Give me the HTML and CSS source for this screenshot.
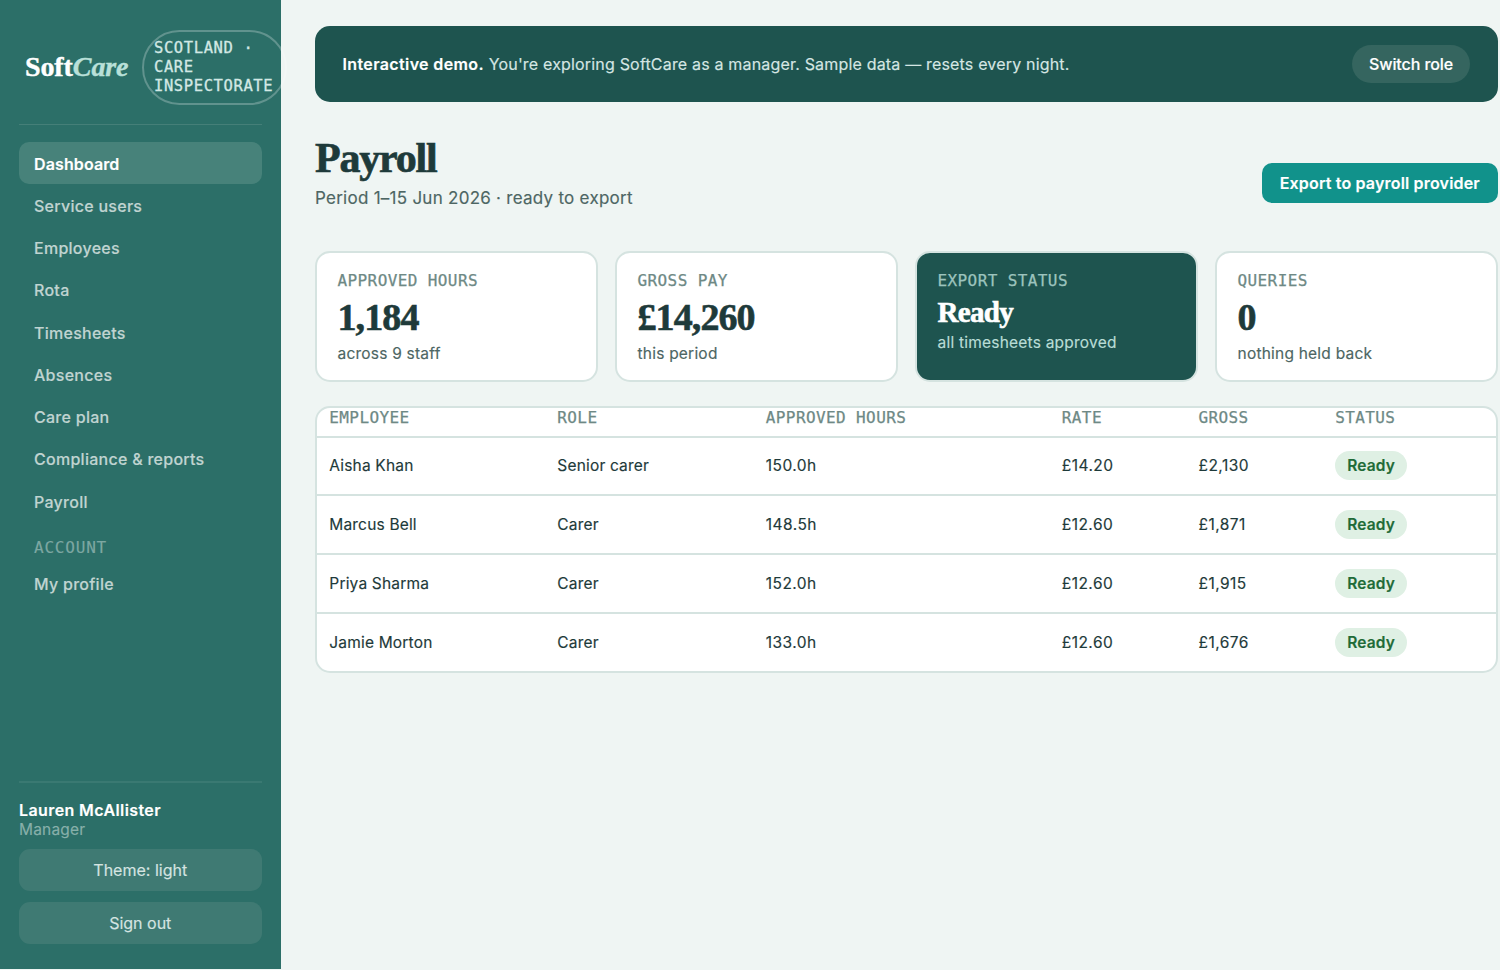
FILE: index.html
```
<!DOCTYPE html>
<html lang="en">
<head>
    <meta charset="UTF-8">
    <meta name="viewport" content="width=device-width, initial-scale=1.0">
    <title>Payroll - SoftCare</title>
    <link rel="stylesheet" href="styles.css">
</head>
<body>
    <aside class="sidebar">
        <div class="brand">
            <div class="logo">Soft<em>Care</em></div>
            <span class="region">SCOTLAND ·<br>CARE<br>INSPECTORATE</span>
        </div>

        <nav class="nav">
            <a class="nav-link active">Dashboard</a>
            <a class="nav-link">Service users</a>
            <a class="nav-link">Employees</a>
            <a class="nav-link">Rota</a>
            <a class="nav-link">Timesheets</a>
            <a class="nav-link">Absences</a>
            <a class="nav-link">Care plan</a>
            <a class="nav-link">Compliance &amp; reports</a>
            <a class="nav-link">Payroll</a>
            <div class="nav-label">ACCOUNT</div>
            <a class="nav-link">My profile</a>
        </nav>

        <div class="user">
            <div class="user-name">Lauren McAllister</div>
            <div class="user-role">Manager</div>
            <button class="side-btn">Theme: light</button>
            <button class="side-btn">Sign out</button>
        </div>
    </aside>

    <main class="main">
        <div class="demo-banner">
            <p class="demo-text"><strong>Interactive demo.</strong> You're exploring SoftCare as a manager. Sample data — resets every night.</p>
            <button class="switch-btn">Switch role</button>
        </div>

        <header class="page-head">
            <div>
                <h1>Payroll</h1>
                <p class="subtitle">Period 1–15 Jun 2026 · ready to export</p>
            </div>
            <button class="export-btn">Export to payroll provider</button>
        </header>

        <section class="stats">
            <div class="card">
                <div class="label">APPROVED HOURS</div>
                <div class="value">1,184</div>
                <div class="note">across 9 staff</div>
            </div>
            <div class="card">
                <div class="label">GROSS PAY</div>
                <div class="value">£14,260</div>
                <div class="note">this period</div>
            </div>
            <div class="card dark">
                <div class="label">EXPORT STATUS</div>
                <div class="value small">Ready</div>
                <div class="note">all timesheets approved</div>
            </div>
            <div class="card">
                <div class="label">QUERIES</div>
                <div class="value">0</div>
                <div class="note">nothing held back</div>
            </div>
        </section>

        <div class="table">
            <div class="row head">
                <span>EMPLOYEE</span><span>ROLE</span><span>APPROVED HOURS</span><span>RATE</span><span>GROSS</span><span>STATUS</span>
            </div>
            <div class="row">
                <span>Aisha Khan</span><span>Senior carer</span><span class="num">150.0h</span><span class="num">£14.20</span><span class="num">£2,130</span><span><b class="pill">Ready</b></span>
            </div>
            <div class="row">
                <span>Marcus Bell</span><span>Carer</span><span class="num">148.5h</span><span class="num">£12.60</span><span class="num">£1,871</span><span><b class="pill">Ready</b></span>
            </div>
            <div class="row">
                <span>Priya Sharma</span><span>Carer</span><span class="num">152.0h</span><span class="num">£12.60</span><span class="num">£1,915</span><span><b class="pill">Ready</b></span>
            </div>
            <div class="row">
                <span>Jamie Morton</span><span>Carer</span><span class="num">133.0h</span><span class="num">£12.60</span><span class="num">£1,676</span><span><b class="pill">Ready</b></span>
            </div>
        </div>
    </main>
</body>
</html>
```

FILE: styles.css
```
* {
    box-sizing: border-box;
}

body {
    margin: 0;
    height: 970px;
    display: flex;
    background: #eff5f3;
    color: #1e3a3a;
    font-family: 'Inter', sans-serif;
    font-size: 16px;
    letter-spacing: 0.18px;
    -webkit-text-stroke: 0.15px;
    overflow: hidden;
}

h1, p {
    margin: 0;
}

button {
    border: none;
    padding: 0;
    font: inherit;
    letter-spacing: inherit;
}

/* Sidebar */
.sidebar {
    width: 280.5px;
    height: 969px;
    flex-shrink: 0;
    padding: 30px 19px 25.5px;
    display: flex;
    flex-direction: column;
    background: #2c6f68;
}

.brand {
    display: flex;
    align-items: center;
    gap: 13.5px;
    height: 95px;
    padding: 0 0 20px 6px;
    border-bottom: 1px solid #457f78;
}

.logo {
    width: 103px;
    flex-shrink: 0;
    font-family: 'Liberation Serif', serif;
    font-size: 28px;
    font-weight: bold;
    letter-spacing: -0.1px;
    color: #fff;
    -webkit-text-stroke: 0.4px;
}

.logo em {
    color: #b9e0d9;
}

.region {
    width: 145px;
    height: 75px;
    flex-shrink: 0;
    padding: 7px 10.5px;
    border: 2px solid rgba(255, 255, 255, 0.25);
    border-radius: 38px;
    font-family: 'DejaVu Sans Mono', monospace;
    font-size: 15.5px;
    line-height: 19px;
    letter-spacing: 0.6px;
    color: #d2e8e4;
    -webkit-text-stroke: 0.3px;
}

.nav {
    margin-top: 17px;
}

.nav-link {
    display: flex;
    align-items: center;
    height: 42.25px;
    padding: 1px 15px 0;
    border-radius: 10px;
    font-weight: 500;
    letter-spacing: 0.27px;
    color: #c0d4d1;
}

.nav-link.active {
    background: #47827a;
    color: #fff;
    font-weight: 600;
    letter-spacing: 0.12px;
}

.nav-label {
    height: 40px;
    padding: 16px 15px 0;
    font-family: 'DejaVu Sans Mono', monospace;
    font-size: 16px;
    line-height: 20px;
    letter-spacing: 0.8px;
    color: #7da7a2;
}

.user {
    margin-top: auto;
    padding-top: 17px;
    border-top: 2px solid #3a7972;
}

.user-name {
    line-height: 20px;
    font-weight: 600;
    letter-spacing: 0.4px;
    color: #fff;
}

.user-role {
    line-height: 19px;
    color: #88b0aa;
    font-size: 15.5px;
}

.side-btn {
    display: block;
    width: 100%;
    height: 42px;
    margin-top: 10.5px;
    border-radius: 11px;
    background: #3f7a73;
    color: #d5e4e1;
    letter-spacing: 0;
}

/* Main content */
.main {
    flex: 1;
    padding: 26px 2.5px 0 34.5px;
}

.demo-banner {
    height: 75.5px;
    padding: 0 27.5px;
    display: flex;
    align-items: center;
    justify-content: space-between;
    border-radius: 15px;
    background: #1e544f;
    color: #d5e6e3;
}

.demo-text strong {
    font-weight: 600;
    letter-spacing: 0.38px;
    color: #fff;
}

.switch-btn {
    width: 118px;
    height: 38px;
    border-radius: 19px;
    background: #35655f;
    color: #fff;
    font-weight: 500;
    letter-spacing: -0.1px;
}

.page-head {
    height: 105px;
    margin-top: 32.5px;
    display: flex;
    justify-content: space-between;
}

h1 {
    font-family: 'Liberation Serif', serif;
    font-size: 42px;
    line-height: 48px;
    letter-spacing: -1.2px;
    -webkit-text-stroke: 0.7px;
}

.subtitle {
    margin-top: 3.5px;
    font-size: 17px;
    line-height: 24px;
    letter-spacing: 0.26px;
    color: #4d6663;
}

.export-btn {
    width: 235.5px;
    height: 40px;
    margin-top: 29px;
    border-radius: 10px;
    background: #11928b;
    color: #fff;
    font-weight: 600;
}

/* Stat cards */
.stats {
    margin-top: 12px;
    display: grid;
    grid-template-columns: repeat(4, 1fr);
    gap: 17.5px;
}

.card {
    height: 131px;
    padding: 17.5px 20.5px;
    background: #fff;
    border: 2px solid #d5e3e0;
    border-radius: 15px;
}

.label, .head {
    font-family: 'DejaVu Sans Mono', monospace;
    color: #6e8985;
    -webkit-text-stroke: 0.25px;
}

.label {
    font-size: 16px;
    line-height: 20px;
    letter-spacing: 0.4px;
}

.value {
    margin-top: 5px;
    font-family: 'Liberation Serif', serif;
    font-size: 38px;
    line-height: 43px;
    font-weight: bold;
    letter-spacing: -0.9px;
    -webkit-text-stroke: 0.6px;
}

.value.small {
    font-size: 29px;
    line-height: 32px;
    letter-spacing: -0.7px;
}

.note {
    margin-top: 4px;
    font-size: 15.5px;
    line-height: 22px;
    letter-spacing: 0.22px;
    color: #4d6663;
}

.card.dark {
    background: #1e544f;
    color: #fff;
}

.card.dark .label {
    color: #9cc3bd;
}

.card.dark .note {
    color: #b9ddd6;
}

/* Payroll table */
.table {
    margin-top: 24px;
    border: 2px solid #d5e3e0;
    border-radius: 15px;
    background: #fff;
    overflow: hidden;
}

.row {
    display: grid;
    grid-template-columns: 228px 208.5px 296px 136.7px 136.7px 1fr;
    align-items: center;
    height: 58.75px;
    padding-left: 12.3px;
    border-top: 2px solid #d5e3e0;
    font-size: 15.5px;
}

.row.head {
    height: 27.5px;
    padding-bottom: 10px;
    border-top: none;
    font-size: 16px;
    letter-spacing: 0.4px;
}

.num {
    letter-spacing: 0.45px;
}

.pill {
    display: inline-block;
    padding: 0 12px;
    border-radius: 15px;
    background: #dff0e4;
    color: #1f6b38;
    font-weight: 600;
    line-height: 29px;
}
```
